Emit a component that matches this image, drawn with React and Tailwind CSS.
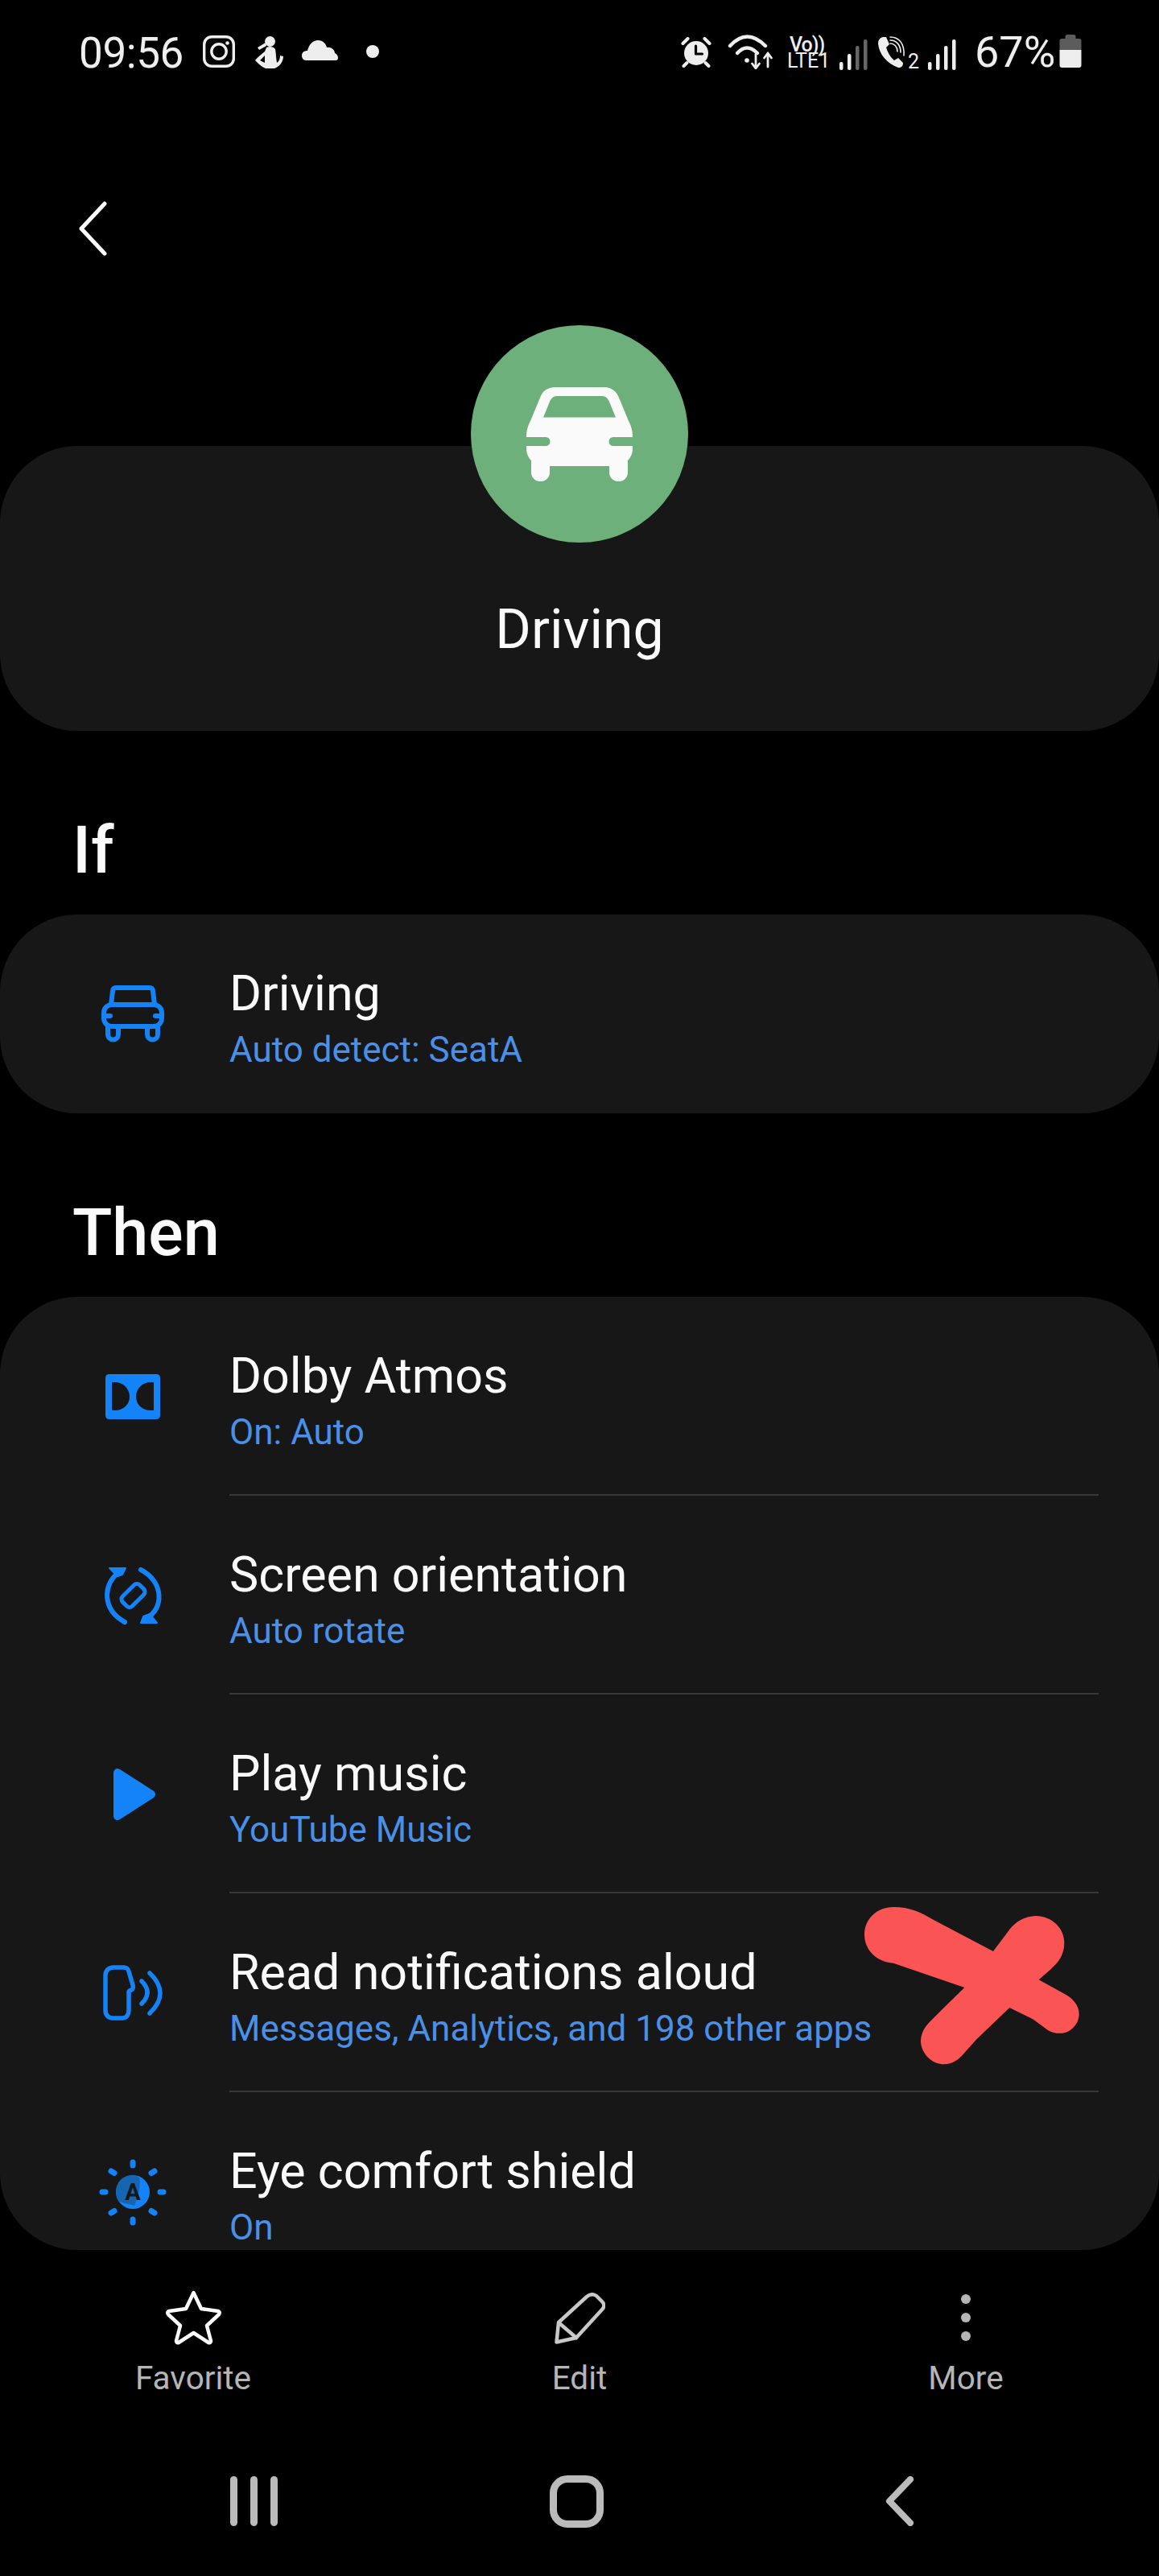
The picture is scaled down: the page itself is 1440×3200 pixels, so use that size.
import React from "react";

const F = { fontFamily: '"Roboto", "Noto Sans", sans-serif' };

function Instagram() {
  return (
    <svg width="40" height="40" viewBox="0 0 40 40" className="ml-[26px] mt-[2px] shrink-0" fill="none" stroke="#eeeeee" strokeWidth="3.4">
      <rect x="1.7" y="1.7" width="36.6" height="36.6" rx="9.5" />
      <circle cx="20" cy="20" r="9.2" />
      <circle cx="30.5" cy="9.5" r="2.3" fill="#eeeeee" stroke="none" />
    </svg>
  );
}
function Health() {
  return (
    <svg width="35" height="40" viewBox="0 0 35 40" className="ml-[25px] mt-[3px] shrink-0" fill="#eeeeee">
      <circle cx="18.5" cy="6.5" r="6.5" />
      <path d="M13 8 L3 14 L5 17 L14 12 Z" />
      <path fillRule="evenodd" d="M14 14 C18 12 23 13 25 16 C26 22 26 28 27 33 C30 31 31 27 31 24 L35 25 C35 32 30 38 24 40 L13 40 L9 38 C6 36 3 33 0 30 C3 26 8 22 12 19 Z M12 24 L6 30 L12 33 Z" />
    </svg>
  );
}
function Cloud() {
  return (
    <svg width="45" height="25" viewBox="0 0 45 25" className="ml-[23px] mt-[8px] shrink-0" fill="#eeeeee">
      <path d="M5 25 C2 25 0 22 0 19 C0 15 3 13 7 13 C9 5 14 0 20 0 C26 0 30 4 31 9 C36 8 41 12 41 16 C44 17 45 20 45 22 C45 24 44 25 42 25 Z" />
    </svg>
  );
}
function Alarm() {
  return (
    <svg width="38" height="38" viewBox="0 0 37 38" className="mt-[4px] shrink-0" fill="none">
      <circle cx="18.5" cy="20" r="15" fill="#eeeeee" />
      <path d="M2 8 L8 2 M35 8 L29 2" stroke="#eeeeee" strokeWidth="4" strokeLinecap="round" />
      <path d="M7 32 L3 36 M30 32 L34 36" stroke="#eeeeee" strokeWidth="4" strokeLinecap="round" />
      <path d="M18 11 V21 H26" stroke="#000000" strokeWidth="3.2" strokeLinecap="round" strokeLinejoin="round" />
    </svg>
  );
}
function Wifi() {
  return (
    <svg width="57" height="44" viewBox="0 0 55 44" className="ml-[20px] shrink-0" fill="none" stroke="#eeeeee" strokeWidth="4.4" strokeLinecap="round">
      <path d="M2 15 Q23 -8 46 15" />
      <path d="M11 24 Q23 11 36 24" />
      <circle cx="23" cy="33" r="2.8" fill="#eeeeee" stroke="none" />
      <path d="M34 25 V43 M29.5 37 L34 43 L38.5 37" strokeWidth="2.8" strokeLinejoin="round" />
      <path d="M49 41 V24 M44.5 30 L49 24 L53.5 30" strokeWidth="2.8" strokeLinejoin="round" />
    </svg>
  );
}
function Bars({ dim, className }) {
  return (
    <svg width="35" height="38" viewBox="0 0 35 38" className={className} fill="#eeeeee">
      <rect x="0" y="28" width="4.5" height="10" rx="2" />
      <rect x="10" y="18" width="4.5" height="20" rx="2" />
      <rect x="20" y="8" width="4.5" height="30" rx="2" fill={dim ? "#666666" : "#eeeeee"} />
      <rect x="30" y="0" width="4.5" height="38" rx="2" fill={dim ? "#666666" : "#eeeeee"} />
    </svg>
  );
}
function Call() {
  return (
    <svg width="36" height="39" viewBox="0 0 36 39" className="ml-[13px] mt-[3px] shrink-0" fill="none">
      <path d="M6 1 C2 2 0 5 0 9 C1 22 11 34 25 39 C29 39 31 37 31 33 L25 27 L20 30 C15 26 12 20 10 14 L14 10 L10 1 Z" fill="#eeeeee" />
      <path d="M15 9 C20 9 24 13 24 19" stroke="#eeeeee" strokeWidth="1.6" strokeLinecap="round" />
      <path d="M15 5 C23 5 28 11 28 20" stroke="#eeeeee" strokeWidth="1.6" strokeLinecap="round" />
      <path d="M15 1 C26 1 33 9 32 24" stroke="#eeeeee" strokeWidth="1.6" strokeLinecap="round" />
    </svg>
  );
}
function Battery() {
  return (
    <svg width="28" height="41" viewBox="0 0 27 41" className="ml-[10px] mt-[1px] shrink-0">
      <rect x="7" y="0" width="13" height="8" rx="2.5" fill="#5c5c5c" />
      <path d="M3 5 H24 Q27 5 27 8 V19 H0 V8 Q0 5 3 5 Z" fill="#5c5c5c" />
      <path d="M0 19 H27 V38 Q27 41 24 41 H3 Q0 41 0 38 Z" fill="#eeeeee" />
    </svg>
  );
}

function StatusBar() {
  return (
    <div className="flex items-start h-[46px] mt-[42px] pl-[98px] text-[#eeeeee]" style={F}>
      <span className="w-[128px] text-[53px] leading-[46px] mt-[1px] tracking-[-0.4px] whitespace-nowrap shrink-0">09:56</span>
      <Instagram />
      <Health />
      <Cloud />
      <span className="w-[16px] h-[16px] rounded-full bg-[#eeeeee] ml-[35px] mt-[14px] shrink-0" />
      <div className="flex flex-1 items-start justify-end pr-[96px]">
        <Alarm />
        <Wifi />
        <div className="ml-[17px] mt-[3px] w-[51px] flex flex-col items-start shrink-0">
          <span className="text-[25px] leading-[21px] font-medium pl-[3px] whitespace-nowrap tracking-[-1px]">Vo))</span>
          <span className="text-[25px] leading-[20px] whitespace-nowrap">LTE1</span>
        </div>
        <Bars dim className="ml-[14px] mt-[7px] shrink-0" />
        <Call />
        <span className="text-[25px] leading-[20px] mt-[25px] ml-[1px] w-[12px] shrink-0">2</span>
        <Bars className="ml-[13px] mt-[7px] shrink-0" />
        <span className="ml-[23px] w-[95px] text-[54px] leading-[46px] whitespace-nowrap shrink-0">67%</span>
        <Battery />
      </div>
    </div>
  );
}

function BigCar() {
  return (
    <svg width="132" height="117" viewBox="0 0 132 117" fill="#fafafa">
      <path
        fillRule="evenodd"
        d="M36 0 H96 C106 0 112 5 115 13 L127 42 C131 50 132 55 132 62 H108 a5.5 5.5 0 0 0 0 11 H132 V76 C132 83 129 88 126 91 V106 a11 11 0 0 1 -11 11 H114 a11 11 0 0 1 -11 -11 V98 H29 V106 a11 11 0 0 1 -11 11 H17 a11 11 0 0 1 -11 -11 V91 C3 88 0 83 0 76 V73 H24 a5.5 5.5 0 0 0 0 -11 H0 C0 55 1 50 5 42 L17 13 C20 5 26 0 36 0 Z M38 11 H94 C99 11 101 14 103 18 L111 37.5 H21 L29 18 C31 14 33 11 38 11 Z"
      />
    </svg>
  );
}
const BLUE = "#1583f8";
function CarIcon() {
  return (
    <svg width="78" height="71" viewBox="0 0 78 71" fill="none" stroke={BLUE} strokeWidth="6" strokeLinecap="round" strokeLinejoin="round">
      <path d="M12 24 L14 7 Q14.500 3 18 3 H60 Q63.500 3 64 7 L66 24" />
      <rect x="3" y="24" width="72" height="27" rx="10" />
      <path d="M8 52 V61 a6.500 6.500 0 0 0 13 0 V52" />
      <path d="M57 52 V61 a6.500 6.500 0 0 0 13 0 V52" />
      <path d="M4 38 H11 M67 38 H74" />
    </svg>
  );
}
function DolbyIcon() {
  return (
    <svg width="68" height="56" viewBox="0 0 68 56">
      <path
        fill={BLUE}
        fillRule="evenodd"
        d="M5 0 H63 Q68 0 68 5 V51 Q68 56 63 56 H5 Q0 56 0 51 V5 Q0 0 5 0 Z M8 10 V45 H12 C22 45 30 38 30 28 C30 18 22 10 12 10 Z M60 10 H56 C46 10 38 18 38 28 C38 38 46 45 56 45 H60 Z"
      />
    </svg>
  );
}
function RotateIcon() {
  return (
    <svg width="75" height="74" viewBox="0 0 75 74" fill="none" stroke={BLUE} strokeWidth="6" strokeLinecap="round" strokeLinejoin="round">
      <path d="M20 8 C0 22 -2 54 27 70" />
      <path d="M47 5 C76 20 76 54 53 66" />
      <path d="M8 3 H28 L24 11 L18 13 Z" fill={BLUE} strokeWidth="2" />
      <path d="M67 71 H47 L50 63 L58 60 Z" fill={BLUE} strokeWidth="2" />
      <rect x="29" y="22" width="17" height="30" rx="5" transform="rotate(45 37.500 37)" strokeWidth="5" />
    </svg>
  );
}
function PlayIcon() {
  return (
    <svg width="54" height="66" viewBox="0 0 54 66" className="ml-[4px]">
      <path d="M6 6 L48 33 L6 60 Z" fill={BLUE} stroke={BLUE} strokeWidth="10" strokeLinejoin="round" />
    </svg>
  );
}
function ReadIcon() {
  return (
    <svg width="74" height="69" viewBox="0 0 74 69" fill="none" stroke={BLUE} strokeWidth="5.5" strokeLinecap="round" strokeLinejoin="round">
      <path d="M13 3 H26 C30 3 31 5 32 8 L37 25 C38 29 37 31 33 32 L32 33 V56 C32 62 29 66 24 66 H12 C6 66 3 62 3 56 V13 C3 7 7 3 13 3 Z" />
      <path d="M48 20 Q62 34 48 48" />
      <path d="M58 10 Q84 35 58 60" />
    </svg>
  );
}
function EyeIcon() {
  return (
    <svg width="84" height="84" viewBox="0 0 84 84" className="mt-[3px]">
      <circle cx="42" cy="41" r="21" fill={BLUE} />
      <path d="M40 20 C28 21 21 30 21 41 C21 46 23 50 25 53 L44 58 C50 44 52 30 50 23 C47 21 44 20 40 20 Z" fill="#1565b0" />
      <text x="42" y="51" textAnchor="middle" fontSize="29" fontWeight="700" fill="#171717" style={F}>A</text>
      <g stroke={BLUE} strokeWidth="7" strokeLinecap="round">
        <path d="M42 4 V8" />
        <path d="M42 75 V79" />
        <path d="M4 41 H8" />
        <path d="M76 41 H80" />
        <path d="M15 15 L19 17.500" />
        <path d="M65 17.500 L69 15" />
        <path d="M15 67 L19 64.500" />
        <path d="M65 64.500 L69 67" />
      </g>
    </svg>
  );
}

function Row({ icon, title, sub, last, children }) {
  return (
    <div className="relative flex h-[247px] shrink-0">
      <div className="w-[285px] pl-[45px] flex items-center justify-center shrink-0">{icon}</div>
      <div className={"flex-1 mr-[75px] pt-[66px] " + (last ? "" : "border-b-2 border-[#383838]")}>
        <div className="text-[61px] leading-[64px] text-[#fafafa] whitespace-nowrap">{title}</div>
        <div className="mt-[14px] text-[44px] leading-[48px] text-[#4a8fe8] whitespace-nowrap">{sub}</div>
      </div>
      {children}
    </div>
  );
}

function Scribble() {
  return (
    <svg width="440" height="300" viewBox="0 0 1320 900" className="absolute left-[1000px] top-[-32px]">
      <path
        fill="#fb5454"
        d="M330 147 C270 147 222 190 222 250 C222 305 265 352 330 356 L595 447 L510 530 L465 575 C440 600 432 625 432 650 C435 695 475 733 518 733 C550 733 575 715 595 690 L640 640 L763 522 L850 565 L905 605 C925 618 945 618 960 617 C995 612 1022 580 1022 545 C1022 515 1000 490 975 475 L872 418 L915 380 C945 355 967 325 967 280 C967 225 920 180 860 180 C815 182 780 205 760 235 L702 312 L480 195 C430 165 390 147 330 147 Z"
      />
    </svg>
  );
}

function Heading({ children }) {
  return <div className="mt-[104px] mb-[34px] pl-[90px] text-[81px] leading-[90px] font-medium text-[#fafafa]">{children}</div>;
}

function Star() {
  return (
    <svg width="71" height="70" viewBox="0 0 71 70" fill="none" stroke="#fafafa" strokeWidth="4.5" strokeLinejoin="round">
      <path d="M35.500 4 L45 24 L66 27 Q69 28 67 31 L52 45 L57 64 Q57 67 54 66 L35.500 54 L17 66 Q14 67 14 64 L19 45 L4 31 Q2 28 5 27 L26 24 Z" />
    </svg>
  );
}
function Pencil() {
  return (
    <svg width="63" height="64" viewBox="0 0 63 64" fill="none" stroke="#c8c8c8" strokeWidth="4.5" strokeLinejoin="round" strokeLinecap="round" className="mt-[4px]">
      <path d="M2.500 61.500 L5 37 L40 5 C45 1 49 2 52 4 L59 11 C62 14 62 18 59 21 L27 56 Z" />
      <path d="M6 38 L27 56" />
    </svg>
  );
}
function Dots() {
  return (
    <div className="h-[70px] flex flex-col items-center justify-center gap-[11px]">
      <span className="w-[12px] h-[12px] rounded-full bg-[#b5b5b5]" />
      <span className="w-[12px] h-[12px] rounded-full bg-[#b5b5b5]" />
      <span className="w-[12px] h-[12px] rounded-full bg-[#b5b5b5]" />
    </div>
  );
}
function Action({ icon, label }) {
  return (
    <div className="w-[480px] flex flex-col items-center">
      <div className="h-[70px] flex items-start">{icon}</div>
      <div className="mt-[17px] text-[40.500px] leading-[46px] text-[#b5b5b5]">{label}</div>
    </div>
  );
}

export default function App() {
  return (
    <div className="w-[1440px] h-[3200px] bg-black overflow-hidden flex flex-col" style={F}>
      <StatusBar />
      <svg width="35" height="68" viewBox="0 0 35 68" fill="none" stroke="#fafafa" strokeWidth="5" strokeLinecap="round" strokeLinejoin="round" className="ml-[98px] mt-[162px] shrink-0">
        <path d="M32 3 L3 34 L32 65" />
      </svg>
      <div className="relative z-10 self-center mt-[86px] -mb-[120px] w-[270px] h-[270px] rounded-full bg-[#6eb07c] flex items-center justify-center shrink-0">
        <BigCar />
      </div>
      <div className="h-[354px] rounded-[96px] bg-[#171717] pt-[190px] text-center text-[68px] leading-[76px] text-[#fafafa] shrink-0">Driving</div>
      <Heading>If</Heading>
      <div className="rounded-[96px] bg-[#171717] overflow-hidden flex flex-col shrink-0">
        <Row last icon={<CarIcon />} title="Driving" sub="Auto detect: SeatA" />
      </div>
      <Heading>Then</Heading>
      <div className="h-[1184px] rounded-[96px] bg-[#171717] overflow-hidden flex flex-col shrink-0">
        <Row icon={<DolbyIcon />} title="Dolby Atmos" sub="On: Auto" />
        <Row icon={<RotateIcon />} title="Screen orientation" sub="Auto rotate" />
        <Row icon={<PlayIcon />} title="Play music" sub="YouTube Music" />
        <Row icon={<ReadIcon />} title="Read notifications aloud" sub="Messages, Analytics, and 198 other apps">
          <Scribble />
        </Row>
        <Row last icon={<EyeIcon />} title="Eye comfort shield" sub="On" />
      </div>
      <div className="flex mt-[49px] shrink-0">
        <Action icon={<Star />} label="Favorite" />
        <Action icon={<Pencil />} label="Edit" />
        <Action icon={<Dots />} label="More" />
      </div>
      <div className="flex items-center h-[66px] mt-[97px] shrink-0">
        <div className="ml-[286px] flex gap-[16px]">
          <span className="w-[9px] h-[62px] rounded-full bg-[#bbbbbb]" />
          <span className="w-[9px] h-[62px] rounded-full bg-[#bbbbbb]" />
          <span className="w-[9px] h-[62px] rounded-full bg-[#bbbbbb]" />
        </div>
        <div className="ml-[338px] w-[67px] h-[65px] rounded-[22px] border-[9px] border-[#bbbbbb]" />
        <svg width="35" height="62" viewBox="0 0 35 62" fill="none" stroke="#bbbbbb" strokeWidth="8" strokeLinecap="round" strokeLinejoin="round" className="ml-[350px]">
          <path d="M31 4 L5 31 L31 58" />
        </svg>
      </div>
    </div>
  );
}
